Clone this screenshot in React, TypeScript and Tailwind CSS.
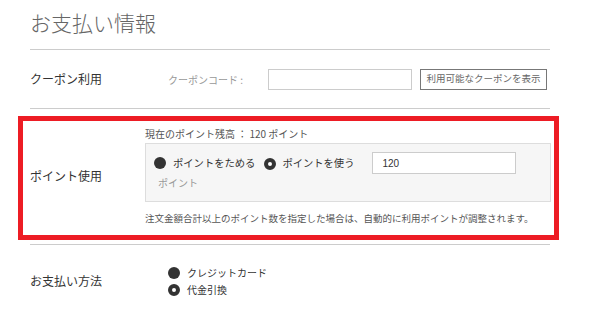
import React from "react";

const font = { fontFamily: '"Noto Sans CJK JP", "Noto Sans", sans-serif' };

function Radio({ checked }: { checked?: boolean }) {
  return checked ? (
    <span className="inline-block w-[12px] h-[12px] rounded-full border-[4px] border-[#333] bg-white shrink-0" />
  ) : (
    <span className="inline-block w-[12px] h-[12px] rounded-full bg-[#333] shrink-0" />
  );
}

export default function App() {
  return (
    <div
      className="w-[600px] h-[313px] bg-white overflow-hidden pl-[30px] pr-[50px] text-[#333]"
      style={font}
    >
      <div className="h-[50px] border-b border-[#ccc] pt-[7px]">
        <h1 className="text-[21px] leading-[30px] font-light text-[#666]">お支払い情報</h1>
      </div>

      <div className="h-[59px] border-b border-[#ccc] flex items-center">
        <div className="w-[138px] text-[12px] leading-[18px]">クーポン利用</div>
        <div className="w-[100px] text-[10px] text-[#999]">クーポンコード :</div>
        <input className="w-[144px] h-[21px] border border-[#ccc] bg-white" />
        <button className="ml-[8px] w-[127px] h-[21px] border border-[#777] bg-white text-[9.5px] text-[#666] leading-none">
          利用可能なクーポンを表示
        </button>
      </div>

      <div className="border-b border-[#ccc] pt-[7px] pb-[4px]">
        <div className="-ml-[12px] w-[541px] border-[5px] border-[#ed1c24] flex pl-[7px] pt-[6px] pb-[10px]">
          <div className="w-[115px] text-[12px] leading-[18px] pt-[40px]">ポイント使用</div>
          <div className="flex-1">
            <div className="text-[10px] leading-[14px] text-[#555]">現在のポイント残高 ： 120 ポイント</div>
            <div className="mt-[2px] w-[406px] h-[59px] border border-[#ddd] bg-[#f6f6f6] pl-[8px] pt-[8px]">
              <div className="flex items-center h-[22px]">
                <Radio />
                <span className="ml-[7px] text-[10.3px] text-[#333]">ポイントをためる</span>
                <span className="ml-[9px]"><Radio checked /></span>
                <span className="ml-[6px] text-[10.3px] text-[#333]">ポイントを使う</span>
                <input
                  defaultValue="120"
                  className="ml-[18px] w-[144px] h-[22px] border border-[#ccc] bg-white pl-[9px] text-[10px] text-[#333]"
                  style={{ fontFamily: '"Liberation Sans", sans-serif' }}
                />
              </div>
              <div className="mt-[2px] pl-[4px] text-[10px] leading-[14px] text-[#999]">ポイント</div>
            </div>
            <div className="mt-[9px] text-[9.5px] leading-[14px] text-[#555]">
              注文金額合計以上のポイント数を指定した場合は、自動的に利用ポイントが調整されます。
            </div>
          </div>
        </div>
      </div>

      <div className="flex items-center pt-[19px]">
        <div className="w-[138px] text-[12px] leading-[18px]">お支払い方法</div>
        <div className="flex flex-col">
          <div className="flex items-center h-[17px]">
            <Radio />
            <span className="ml-[7px] text-[10px] text-[#333]">クレジットカード</span>
          </div>
          <div className="flex items-center h-[17px]">
            <Radio checked />
            <span className="ml-[7px] text-[10px] text-[#333]">代金引換</span>
          </div>
        </div>
      </div>
    </div>
  );
}
